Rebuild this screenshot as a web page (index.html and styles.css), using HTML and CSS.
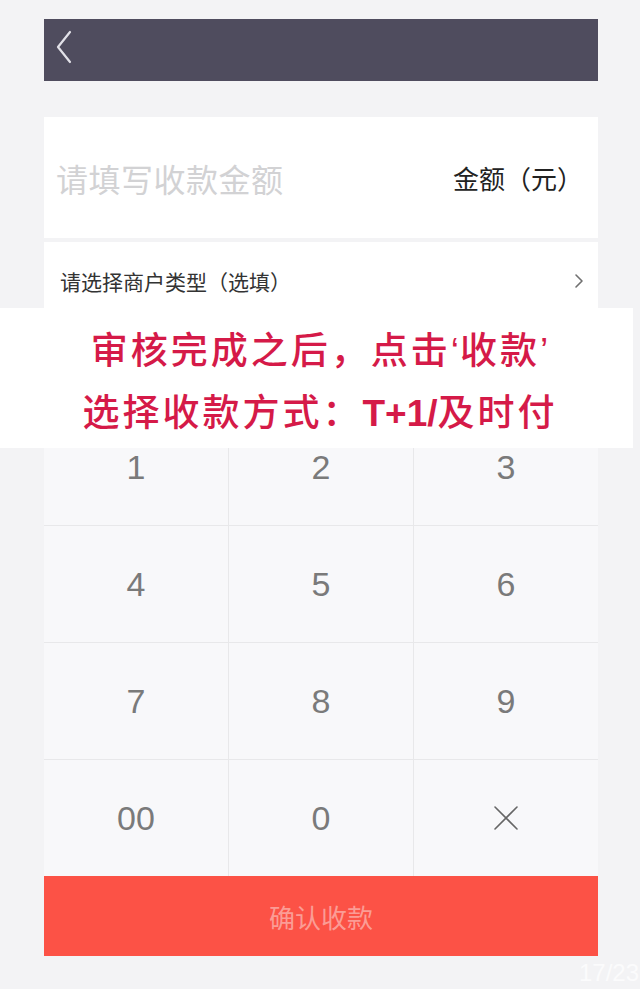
FILE: index.html
```html
<!DOCTYPE html>
<html lang="zh-CN">
<head>
<meta charset="utf-8">
<title>收款</title>
<link rel="stylesheet" href="styles.css">
</head>
<body>
<div class="screen">
  <div class="header">
    <svg class="back" width="18" height="34" viewBox="0 0 18 34"><path d="M15 2 L3 17 L15 32" fill="none" stroke="#e2e1e8" stroke-width="2.2" stroke-linecap="round" stroke-linejoin="round"/></svg>
  </div>
  <div class="amount-row">
    <span class="placeholder">请填写收款金额</span>
    <span class="unit">金额（元）</span>
  </div>
  <div class="merchant-row">
    <span class="merchant">请选择商户类型（选填）</span>
    <svg class="chev" width="12" height="16" viewBox="0 0 12 16"><path d="M3 2 L9 8 L3 14" fill="none" stroke="#707070" stroke-width="1.6" stroke-linecap="round" stroke-linejoin="round"/></svg>
  </div>
  <div class="keypad">
    <div class="key">1</div>
    <div class="key">2</div>
    <div class="key">3</div>
    <div class="key">4</div>
    <div class="key">5</div>
    <div class="key">6</div>
    <div class="key">7</div>
    <div class="key">8</div>
    <div class="key">9</div>
    <div class="key">00</div>
    <div class="key">0</div>
    <div class="key"><svg width="26" height="26" viewBox="0 0 26 26"><path d="M2 2 L24 24 M24 2 L2 24" stroke="#666" stroke-width="1.6" stroke-linecap="round"/></svg></div>
  </div>
  <div class="confirm">确认收款</div>
</div>
<div class="notice">
  <p>审核完成之后，点击<span class="q">‘</span>收款<span class="q">’</span></p>
  <p>选择收款方式：<span class="latin">T+1/</span>及时付</p>
</div>
<div class="pager">17/23</div>
</body>
</html>
```
FILE: styles.css
```css
html, body {
  margin: 0;
  padding: 0;
}
body {
  width: 640px;
  height: 989px;
  background: #f3f3f5;
  position: relative;
  overflow: hidden;
  font-family: "Noto Sans CJK SC", "Liberation Sans", sans-serif;
}
.screen {
  width: 554px;
  margin-left: 44px;
  padding-top: 19px;
  display: flex;
  flex-direction: column;
}
.header {
  height: 62px;
  background: #4f4c5e;
  display: flex;
  align-items: flex-start;
  padding: 11px 0 0 11px;
  box-sizing: border-box;
}
.amount-row {
  margin-top: 36px;
  height: 121px;
  background: #fff;
  display: flex;
  align-items: center;
  justify-content: space-between;
  padding: 0 15px 0 12px;
}
.placeholder {
  font-size: 32px;
  color: #d2d2d4;
  letter-spacing: 0.5px;
}
.unit {
  font-size: 26px;
  color: #222;
}
.merchant-row {
  margin-top: 4px;
  height: 78px;
  background: #fff;
  display: flex;
  align-items: center;
  justify-content: space-between;
  padding: 0 13px 0 16px;
}
.merchant {
  font-size: 21px;
  color: #333;
}
.keypad {
  margin-top: 89px;
  display: grid;
  grid-template-columns: 184px 184px 184px;
  grid-auto-rows: 116px;
  gap: 1px;
  background: #e8e8ea;
}
.key {
  background: #f8f8fa;
  display: flex;
  align-items: center;
  justify-content: center;
  font-family: "Liberation Sans", sans-serif;
  font-size: 34px;
  color: #7a7a7a;
}
.confirm {
  height: 80px;
  background: #fc5246;
  color: #fb9c95;
  font-size: 26px;
  display: flex;
  align-items: center;
  justify-content: center;
}
.notice {
  position: absolute;
  top: 308px;
  left: 0;
  width: 626px;
  height: 140px;
  padding-left: 7px;
  background: #fff;
  text-align: center;
  box-sizing: content-box;
}
.notice p {
  margin: 0;
  font-size: 37px;
  line-height: 58px;
  letter-spacing: 3px;
  font-weight: 500;
  color: #d51a48;
  white-space: nowrap;
}
.notice p:first-child {
  margin-top: 11px;
}
.notice .q {
  font-family: "Liberation Sans", sans-serif;
  letter-spacing: 1px;
}
.notice .latin {
  font-family: "Liberation Sans", sans-serif;
  font-weight: 700;
  letter-spacing: 0;
}
.pager {
  position: absolute;
  left: 579px;
  top: 959px;
  font-family: "Liberation Sans", sans-serif;
  font-size: 24px;
  color: #fbfbfc;
  white-space: nowrap;
}
```
